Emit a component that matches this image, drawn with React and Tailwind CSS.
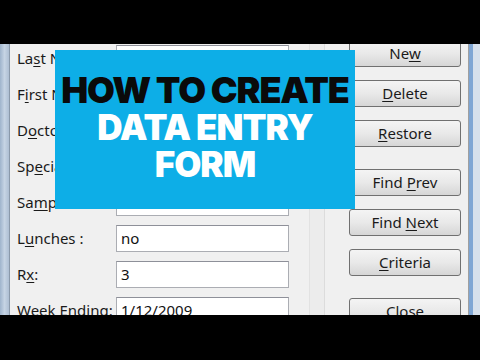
import React from 'react';

const rows = [
  { pre: 'La', u: 's', post: 't Name :', value: '' },
  { pre: 'F', u: 'i', post: 'rst Name :', value: '' },
  { pre: 'D', u: 'o', post: 'ctor :', value: '' },
  { pre: 'Sp', u: 'e', post: 'cialty :', value: '' },
  { pre: 'Sa', u: 'm', post: 'ples :', value: '' },
  { pre: 'L', u: 'u', post: 'nches :', value: 'no' },
  { pre: 'R', u: 'x', post: ':', value: '3' },
  { pre: 'Week Endin', u: 'g', post: ':', value: '1/12/2009' },
];

const buttons = [
  { pre: 'Ne', u: 'w', post: '' },
  { pre: '', u: 'D', post: 'elete' },
  { pre: '', u: 'R', post: 'estore' },
  { pre: 'Find ', u: 'P', post: 'rev', gap: true },
  { pre: 'Find ', u: 'N', post: 'ext' },
  { pre: '', u: 'C', post: 'riteria' },
  { pre: 'Cl', u: 'o', post: 'se', gap: true },
];

function Mnemonic({ pre, u, post }) {
  return (
    <>
      {pre}
      <span className="underline underline-offset-2">{u}</span>
      {post}
    </>
  );
}

export default function App() {
  return (
    <div className="flex flex-col w-[480px] h-[360px] bg-black overflow-hidden" style={{ fontFamily: '"Noto Sans", "Open Sans", sans-serif' }}>
      <div className="h-[44px] bg-black" />

      {/* window area */}
      <div className="relative flex h-[271px] overflow-hidden bg-[#f0f0f0]">
        {/* left frame */}
        <div className="w-[9px] bg-gradient-to-r from-[#9fb4cc] via-[#c6d4e4] to-[#aebfd3]" />
        <div className="w-px bg-[#8a99aa]" />

        {/* labels + inputs */}
        <div className="flex flex-col gap-[9px] pt-px w-[280px]">
          {rows.map((r, i) => (
            <div key={i} className="flex items-center h-[27px]">
              <div className="w-[106px] pl-[7px] text-[15px] text-[#1a1a1a] whitespace-nowrap overflow-hidden">
                <Mnemonic {...r} />
              </div>
              <div className="w-[173px] h-[27px] bg-white border border-[#abadb3] border-t-[#8e9099] px-[4px] flex items-center text-[15px] text-[#111]">
                {r.value}
              </div>
            </div>
          ))}
        </div>

        {/* scroll gutter lines */}
        <div className="flex w-[59px]">
          <div className="w-[19px]" />
          <div className="w-px bg-[#e2e2e2]" />
          <div className="w-[14px] bg-[#ececec]" />
          <div className="w-px bg-[#dcdcdc]" />
          <div className="flex-1" />
        </div>

        {/* buttons */}
        <div className="flex flex-col gap-[13px] -mt-[4px] w-[112px]">
          {buttons.map((b, i) => (
            <button
              key={i}
              className={`h-[27px] shrink-0 rounded-[3px] border border-[#707070] bg-gradient-to-b from-[#f4f4f4] via-[#e9e9e9] to-[#d6d6d6] text-[15px] text-[#1a1a1a] ${b.gap ? 'mt-[9px]' : ''}`}
            >
              <Mnemonic {...b} />
            </button>
          ))}
        </div>

        {/* right frame */}
        <div className="w-[7px]" />
        <div className="w-px bg-[#a0a0a0]" />
        <div className="w-[4px] bg-[#7fa6d4]" />
        <div className="flex-1 bg-[#d6e0ec]" />

        {/* title banner overlay */}
        <div className="absolute left-[55px] top-[6px] w-[300px] h-[159px] bg-[#0daee7] flex flex-col items-center pt-[22px]" style={{ fontFamily: 'Inter, "Open Sans", sans-serif' }}>
          <div className="text-[36px] leading-[36px] font-black tracking-[-1.2px] text-[#0a0a0a] whitespace-nowrap">HOW TO CREATE</div>
          <div className="text-[35px] leading-[36px] font-black tracking-[-1px] text-white whitespace-nowrap mt-px">DATA ENTRY</div>
          <div className="text-[35px] leading-[36px] font-black tracking-[-1px] text-white whitespace-nowrap mt-px">FORM</div>
        </div>
      </div>

      <div className="flex-1 bg-black" />
    </div>
  );
}
